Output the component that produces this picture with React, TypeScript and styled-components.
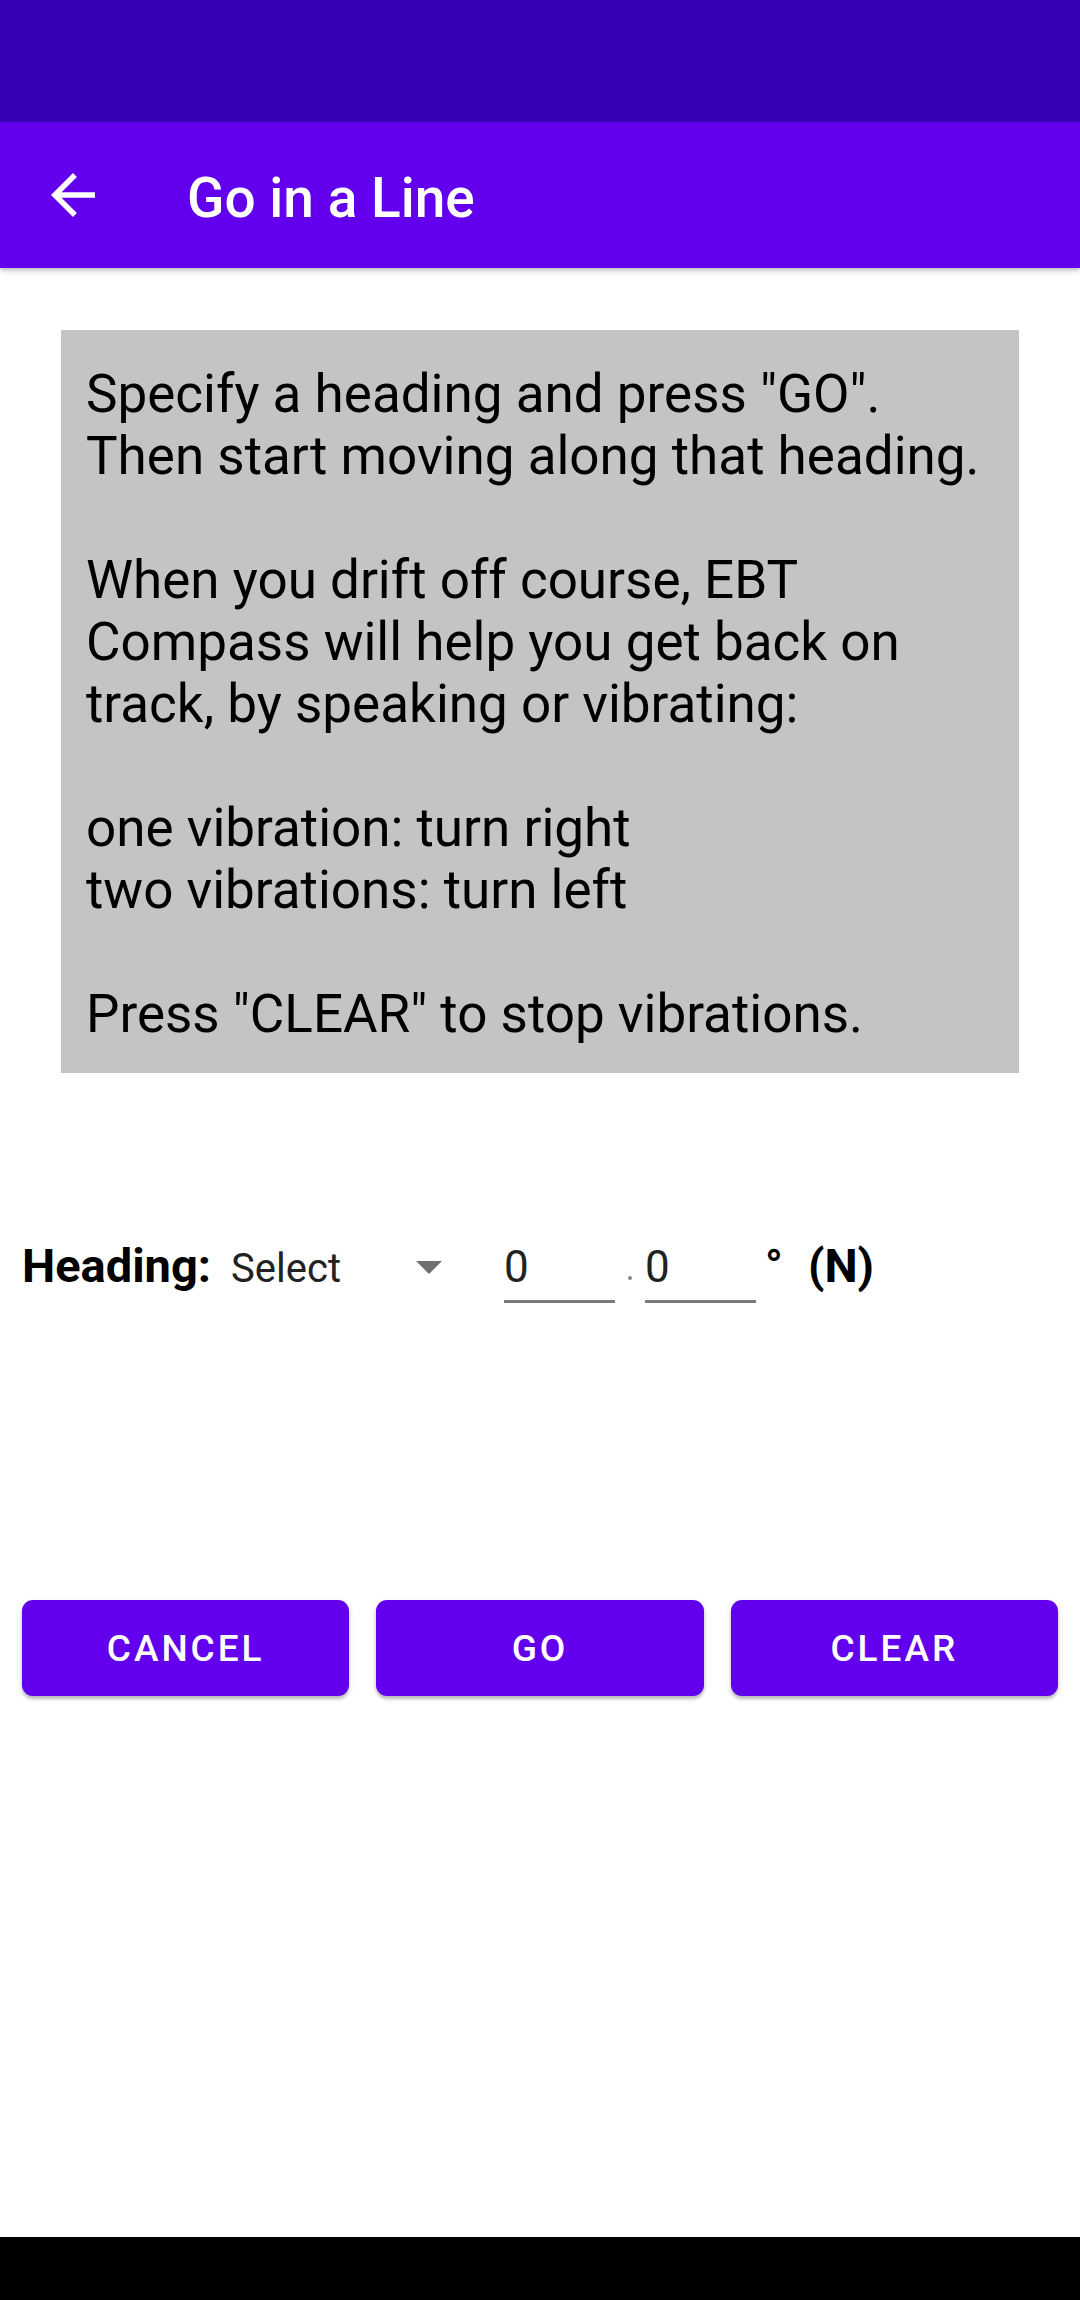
import React from 'react';
import styled, { createGlobalStyle } from 'styled-components';

const GlobalStyle = createGlobalStyle`
  html, body {
    margin: 0;
    padding: 0;
    background: #fff;
  }
  body {
    font-family: Roboto, "Noto Sans", Arial, sans-serif;
  }
`;

const Screen = styled.div`
  display: flex;
  flex-direction: column;
  width: 1080px;
  height: 2300px;
  background: #fff;
`;

const StatusBar = styled.div`
  height: 122px;
  background: #3700b3;
`;

const AppBar = styled.header`
  display: flex;
  align-items: center;
  height: 146px;
  padding-left: 40px;
  background: #6200ee;
  box-shadow: 0 2px 4px rgba(0, 0, 0, 0.22), 0 4px 8px rgba(0, 0, 0, 0.08);
  position: relative;
  z-index: 1;
`;

const BackButton = styled.button`
  display: flex;
  align-items: center;
  justify-content: center;
  width: 66px;
  height: 66px;
  padding: 0;
  border: none;
  background: transparent;
  cursor: pointer;
`;

const Title = styled.h1`
  margin: 0 0 0 81px;
  padding-top: 5px;
  font-size: 55px;
  font-weight: 500;
  color: #fff;
`;

const Content = styled.main`
  flex: 1;
  display: flex;
  flex-direction: column;
`;

const InfoBox = styled.div`
  margin: 62px 61px 0 61px;
  padding: 33px 25px 28px 25px;
  background: #c4c4c4;
  color: #000;
  font-size: 53px;
  line-height: 62px;
  white-space: pre;
`;

const HeadingRow = styled.div`
  display: flex;
  align-items: baseline;
  margin-top: 165px;
  padding-left: 22px;
  height: 80px;
`;

const Label = styled.span`
  font-size: 47px;
  font-weight: 700;
  color: #000;
`;

const Spinner = styled.div`
  display: flex;
  align-items: baseline;
  margin-left: 20px;
  width: 273px;
`;

const SpinnerText = styled.span`
  font-size: 40px;
  color: #222;
  flex: 1;
`;

const Caret = styled.span`
  display: inline-block;
  width: 0;
  height: 0;
  border-left: 13px solid transparent;
  border-right: 13px solid transparent;
  border-top: 13px solid #6f6f6f;
  margin-right: 62px;
  transform: translateY(-8px);
`;

const NumberField = styled.div`
  width: 111px;
  padding-bottom: 7px;
  border-bottom: 3px solid #7a7a7a;
  font-size: 44px;
  color: #222;
`;

const Dot = styled.span`
  width: 4px;
  height: 4px;
  margin: 0 13px;
  border-radius: 50%;
  background: #888;
  align-self: center;
`;

const Degree = styled.span`
  margin-left: 9px;
  font-size: 46px;
  font-weight: 700;
  color: #000;
`;

const Direction = styled.span`
  margin-left: 25px;
  font-size: 47px;
  font-weight: 700;
  color: #000;
`;

const ButtonRow = styled.div`
  display: flex;
  gap: 27px;
  margin-top: 282px;
  padding: 0 22px;
`;

const ActionButton = styled.button`
  flex: 1;
  height: 96px;
  border: none;
  border-radius: 11px;
  background: #6200ee;
  color: #fff;
  font-family: Roboto, Arial, sans-serif;
  font-size: 37px;
  font-weight: 500;
  letter-spacing: 0.08em;
  text-transform: uppercase;
  box-shadow: 0 3px 3px rgba(0, 0, 0, 0.2), 0 2px 6px rgba(0, 0, 0, 0.12);
  cursor: pointer;
`;

const NavBar = styled.div`
  height: 63px;
  background: #000;
`;

const ArrowBack = () => (
  <svg width="66" height="66" viewBox="0 0 24 24" fill="#fff">
    <path d="M20 11H7.83l5.59-5.59L12 4l-8 8 8 8 1.41-1.41L7.83 13H20v-2z" />
  </svg>
);

const instructions = [
  'Specify a heading and press "GO".',
  'Then start moving along that heading.',
  '',
  'When you drift off course, EBT',
  'Compass will help you get back on',
  'track, by speaking or vibrating:',
  '',
  'one vibration: turn right',
  'two vibrations: turn left',
  '',
  'Press "CLEAR" to stop vibrations.',
].join('\n');

const App: React.FC = () => {
  return (
    <>
      <GlobalStyle />
      <Screen>
        <StatusBar />
        <AppBar>
          <BackButton aria-label="Back">
            <ArrowBack />
          </BackButton>
          <Title>Go in a Line</Title>
        </AppBar>

        <Content>
          <InfoBox>{instructions}</InfoBox>

          <HeadingRow>
            <Label>Heading:</Label>
            <Spinner>
              <SpinnerText>Select</SpinnerText>
              <Caret />
            </Spinner>
            <NumberField>0</NumberField>
            <Dot />
            <NumberField>0</NumberField>
            <Degree>°</Degree>
            <Direction>(N)</Direction>
          </HeadingRow>

          <ButtonRow>
            <ActionButton>Cancel</ActionButton>
            <ActionButton>Go</ActionButton>
            <ActionButton>Clear</ActionButton>
          </ButtonRow>
        </Content>

        <NavBar />
      </Screen>
    </>
  );
};

export default App;
